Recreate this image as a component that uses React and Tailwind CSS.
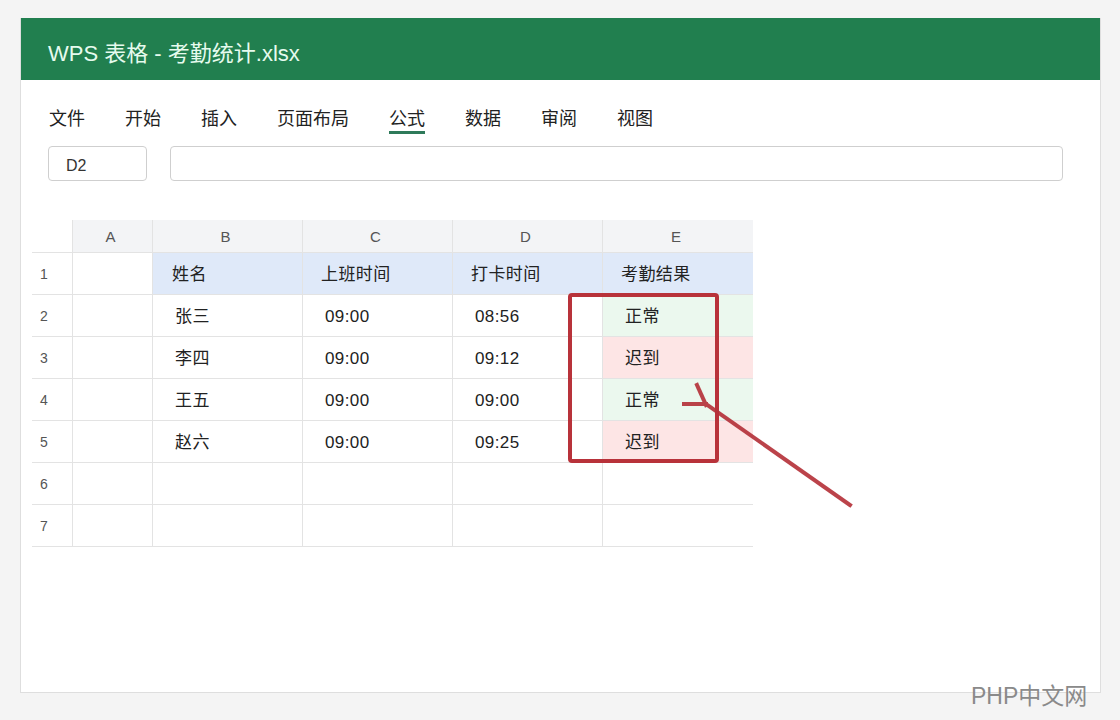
const menus = ['文件', '开始', '插入', '页面布局', '公式', '数据', '审阅', '视图'];
const cols = ['A', 'B', 'C', 'D', 'E'];
const rows = [
  { b: '张三', c: '09:00', d: '08:56', e: '正常', ok: true },
  { b: '李四', c: '09:00', d: '09:12', e: '迟到', ok: false },
  { b: '王五', c: '09:00', d: '09:00', e: '正常', ok: true },
  { b: '赵六', c: '09:00', d: '09:25', e: '迟到', ok: false },
];

const font = { fontFamily: '"Liberation Sans", "Noto Sans CJK SC", sans-serif' };
const line = 'border-[#e3e3e3]';

function RowNum({ n }) {
  return <div className={`h-[42px] border-b ${line} flex items-center pl-2 pt-[2px] text-[14px] text-[#555]`}>{n}</div>;
}

function Cell({ children, bg = 'bg-white', pad = 'pl-[22px]' }) {
  return (
    <div className={`h-[42px] border-b border-l ${line} ${bg} ${pad} pt-[3px] flex items-center text-[17px] text-[#222] tracking-[0.4px]`}>
      {children}
    </div>
  );
}

export default function App() {
  return (
    <div className="relative w-[1120px] h-[720px] bg-[#f4f4f4] pt-[18px] pl-[20px]" style={font}>
      <div className="w-[1081px] h-[675px] bg-white border border-[#dedede] border-t-0">
        <div className="h-[62px] bg-[#217f4f] pl-[27px] pt-[9px] flex items-center text-[22px] text-[#e6fbee]">
          WPS 表格 - 考勤统计.xlsx
        </div>

        {/* menu */}
        <div className="flex gap-[40px] pl-[28px] pt-[27px]">
          {menus.map((m) => (
            <div
              key={m}
              className={`leading-[24px] text-[18px] text-[#222] border-b-[3px] ${m === '公式' ? 'border-[#2e7a5a]' : 'border-transparent'}`}
            >
              {m}
            </div>
          ))}
        </div>

        {/* name box + formula bar */}
        <div className="flex gap-[23px] pl-[27px] pr-[37px] mt-[12px]">
          <div className="w-[99px] h-[35px] border border-[#cfcfcf] rounded-[4px] flex items-center pl-[17px] pt-[4px] text-[16px] text-[#333]">D2</div>
          <div className="flex-1 h-[35px] border border-[#cfcfcf] rounded-[4px]" />
        </div>

        {/* grid */}
        <div className="ml-[11px] mt-[39px] w-[721px] grid grid-cols-[40px_80px_150px_150px_150px_151px]">
          <div className={`h-[33px] border-b ${line}`} />
          {cols.map((c) => (
            <div key={c} className={`h-[33px] bg-[#f3f4f6] border-b border-l ${line} flex items-center justify-center pt-[3px] pr-[4px] text-[15px] text-[#555]`}>
              {c}
            </div>
          ))}

          <RowNum n={1} />
          <Cell />
          <Cell bg="bg-[#dfe9f9]" pad="pl-[19px]">姓名</Cell>
          <Cell bg="bg-[#dfe9f9]" pad="pl-[18px]">上班时间</Cell>
          <Cell bg="bg-[#dfe9f9]" pad="pl-[18px]">打卡时间</Cell>
          <Cell bg="bg-[#dfe9f9]" pad="pl-[18px]">考勤结果</Cell>

          {rows.map((r, i) => (
            <div key={i} className="contents">
              <RowNum n={i + 2} />
              <Cell />
              <Cell>{r.b}</Cell>
              <Cell>{r.c}</Cell>
              <Cell>{r.d}</Cell>
              <Cell bg={r.ok ? 'bg-[#ebf8ee]' : 'bg-[#fde5e5]'}>{r.e}</Cell>
            </div>
          ))}

          {[6, 7].map((n) => (
            <div key={n} className="contents">
              <RowNum n={n} />
              <Cell />
              <Cell />
              <Cell />
              <Cell />
              <Cell />
            </div>
          ))}
        </div>
      </div>

      {/* red annotation */}
      <div className="absolute left-[568px] top-[293px] w-[151px] h-[170px] border-4 border-[#b8323a] rounded-[4px]" />
      <svg className="absolute left-0 top-0" width="1120" height="720" viewBox="0 0 1120 720" fill="none">
        <g stroke="#b5333b" strokeWidth="4" strokeLinecap="square" opacity="0.92">
          <path d="M850 505 L706 404" />
          <path d="M697 385 L706 405" />
          <path d="M684 404 L706 404" />
        </g>
      </svg>

      {/* watermark */}
      <div className="absolute left-[971px] top-[679px] text-[23px] text-[#8a8a8a]">PHP中文网</div>
    </div>
  );
}
